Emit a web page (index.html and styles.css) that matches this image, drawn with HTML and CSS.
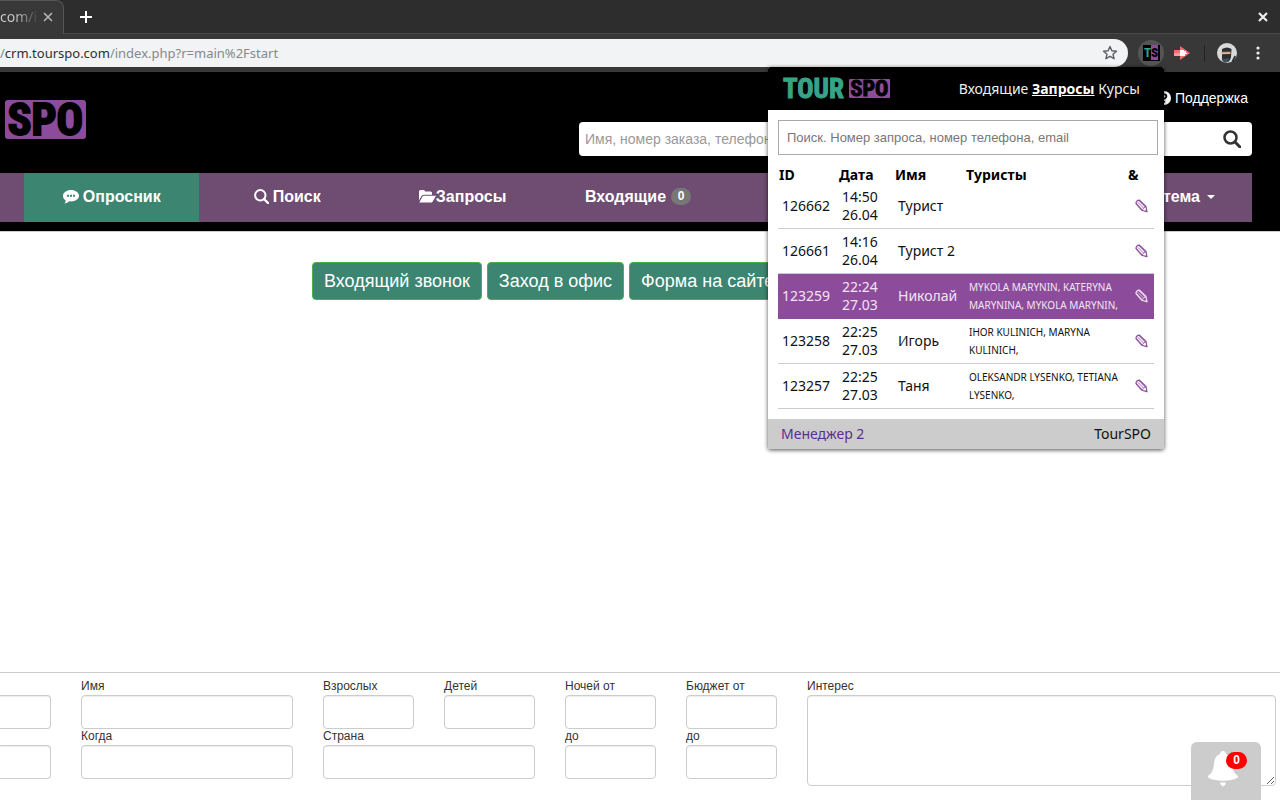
FILE: index.html
```html
<!DOCTYPE html>
<html lang="ru">
<head>
<meta charset="utf-8">
<title>TourSPO</title>
<meta name="viewport" content="width=device-width">
<link rel="stylesheet" href="styles.css">
</head>
<body>
<svg width="0" height="0" class="sprite"><symbol id="pencil" viewBox="0 0 13 14"><path d="M1 4.500Q1 1.500 4.500 1.200L11 7.500l1 5.300-5.300-1.600z" fill="none" stroke="currentColor" stroke-width="1.200" stroke-linejoin="round"/><path d="M2.700 3.200l6 6M4.300 2l6 6M1.500 5l5.700 5.700M11 7.800q-2.500.5-3.800 3.200" fill="none" stroke="currentColor" stroke-width=".8"/><path d="M10.800 11l1.400 2-2.300-.5z" fill="currentColor"/></symbol></svg>
<div class="tabstrip">
  <div class="tab"><span class="tab-title">com/i</span>
    <button class="bare tab-close" aria-label="Закрыть вкладку"><svg width="10" height="10" viewBox="0 0 10 10"><path d="M1 1l8 8M9 1l-8 8" stroke="#b8b8b8" stroke-width="1.500"/></svg></button>
  </div>
  <button class="bare new-tab" aria-label="Новая вкладка"><svg width="12" height="12" viewBox="0 0 12 12"><path d="M6 0v12M0 6h12" stroke="#fff" stroke-width="2"/></svg></button>
  <button class="bare window-close" aria-label="Закрыть окно"><svg width="10" height="10" viewBox="0 0 10 10"><path d="M1 1l8 8M9 1l-8 8" stroke="#eee" stroke-width="2.2"/></svg></button>
</div>
<div class="toolbar">
  <div class="address"><span class="url"><i>/</i>crm.tourspo.com<i>/index.php?r=main%2Fstart</i></span>
    <button class="bare" aria-label="В закладки"><svg width="16" height="16" viewBox="0 0 16 16"><path d="M8 1.600l1.900 4.200 4.600.4-3.500 3 1.100 4.500L8 11.300l-4.100 2.400L5 9.200l-3.500-3 4.600-.4z" fill="none" stroke="#5b5e62" stroke-width="1.400" stroke-linejoin="round"/></svg></button>
  </div>
  <button class="bare ext" aria-label="TourSPO"><span class="ts">T<b>S</b></span></button>
  <button class="bare arrow" aria-label="Расширение"><svg width="18" height="14" viewBox="0 0 18 14"><path d="M1 4h6V0l10 7-10 7v-4H1z" fill="#f26d6d"/><path d="M7 4h4v1h2v2h1v1h-2v2H7z" fill="#fff"/><path d="M1 7h6v3H1z" fill="#ff9b92"/></svg></button>
  <span class="divider"></span>
  <button class="bare avatar" aria-label="Профиль"><svg width="20" height="20" viewBox="0 0 20 20"><circle cx="10" cy="10" r="10" fill="#d9d9d9"/><path d="M5 6q5-3 9.500 0l-.5 8q-1 5-5 5.500-3 0-4-3z" fill="#292e34"/><path d="M4.500 9l9-.3v2.300l-8.500.3z" fill="#ddb38e"/><path d="M4.500 9l9-.3" stroke="#8a5a36" stroke-width=".6"/><path d="M14.500 18.500l3-6 1.500 1-2.500 5z" fill="#292e34"/><path d="M5 15l3 1 4-1-1 4-4-.3z" fill="#3f5260"/></svg></button>
  <button class="bare" aria-label="Меню"><svg width="4" height="14" viewBox="0 0 4 14" fill="#eee"><circle cx="2" cy="2" r="1.600"/><circle cx="2" cy="7" r="1.600"/><circle cx="2" cy="12" r="1.600"/></svg></button>
</div>

<header class="site-header">
  <div class="header-top">
    <a class="logo" href="#">SPO</a>
    <div class="header-tools">
      <a class="support" href="#"><svg width="14" height="14" viewBox="0 0 14 14"><circle cx="7" cy="7" r="7" fill="#fff"/><path d="M4.800 5.200c.3-2.700 4.600-2.400 4.600.1C9.400 7 7.200 7 7.200 8.600M7.200 10v1.600" fill="none" stroke="#000" stroke-width="1.800"/></svg> Поддержка</a>
      <form class="search">
        <input type="text" aria-label="Поиск" placeholder="Имя, номер заказа, телефон">
        <button class="bare" type="button" aria-label="Найти"><svg width="18" height="18" viewBox="0 0 18 18"><circle cx="7.500" cy="7.500" r="6" fill="none" stroke="#333" stroke-width="2.500"/><path d="M12 12l5 5" stroke="#333" stroke-width="3" stroke-linecap="round"/></svg></button>
      </form>
    </div>
  </div>
  <nav class="nav">
    <a class="active" href="#"><svg width="16" height="14" viewBox="0 0 16 14"><path d="M8 0c4.400 0 8 2.500 8 5.700s-3.600 5.700-8 5.700c-.6 0-1.200 0-1.800-.1C4.700 12.700 3 13.300 1.300 13.500c.8-.8 1.300-1.700 1.400-3C1 9.400 0 7.700 0 5.700 0 2.500 3.600 0 8 0z" fill="#fff"/><path d="M4 4.700h2v2H4zM7 4.700h2v2H7zM10 4.700h2v2h-2z" fill="#3c8570"/></svg> Опросник</a>
    <a href="#"><svg width="15" height="15" viewBox="0 0 15 15"><circle cx="6.300" cy="6.300" r="5.200" fill="none" stroke="#fff" stroke-width="2"/><path d="M10 10l4 4" stroke="#fff" stroke-width="2.400" stroke-linecap="round"/></svg> Поиск</a>
    <a href="#"><svg width="17" height="13" viewBox="0 0 17 13" fill="#fff"><path d="M0 10.500V1.500Q0 0 1.500 0h3Q6 0 6 1.500h5.500Q13 1.500 13 3v1.700H5q-1.500 0-2.500 1.300z"/><path d="M4.800 5.700H17L13.700 11.400Q13 12.600 11.500 12.600H.3l3.200-6q.5-.9 1.300-.9z"/></svg>Запросы</a>
    <a href="#">Входящие <span class="count">0</span></a>
    <span class="covered"></span>
    <a class="system" href="#">Система <span class="caret"></span></a>
  </nav>
</header>

<main class="actions">
  <button>Входящий звонок</button>
  <button>Заход в офис</button>
  <button>Форма на сайте</button>
</main>

<form class="survey">
  <div class="field bleed"><span class="label"></span><input type="text" aria-label="Поле 1"></div>
  <div class="field"><label for="name">Имя</label><input id="name" type="text"></div>
  <div class="field"><label for="adults">Взрослых</label><input id="adults" type="text"></div>
  <div class="field"><label for="kids">Детей</label><input id="kids" type="text"></div>
  <div class="field"><label for="nights">Ночей от</label><input id="nights" type="text"></div>
  <div class="field"><label for="budget">Бюджет от</label><input id="budget" type="text"></div>
  <div class="field interest"><label for="interest">Интерес</label><textarea id="interest"></textarea></div>
  <div class="field bleed"><span class="label"></span><input type="text" aria-label="Поле 2"></div>
  <div class="field"><label for="when">Когда</label><input id="when" type="text"></div>
  <div class="field wide"><label for="country">Страна</label><input id="country" type="text"></div>
  <div class="field"><label for="nights2">до</label><input id="nights2" type="text"></div>
  <div class="field"><label for="budget2">до</label><input id="budget2" type="text"></div>
</form>

<button class="bare bell" aria-label="Уведомления"><svg width="32" height="36" viewBox="0 0 32 36" fill="#fff"><path d="M13 3q0-3 3-3t3 3c4 1.500 5.500 5 6 10 .6 6 2 9 5.500 11.500.9.7.6 2-.3 2.600-7 3.600-21.400 3.600-28.400 0-.9-.6-1.200-1.900-.3-2.600C5 22 6.400 19 7 13c.5-5 2-8.500 6-10z"/><path d="M13 31.500h6q0 2-3 4-3-2-3-4z"/></svg><span class="bell-count">0</span></button>

<aside class="popup">
  <header class="popup-head">
    <div class="popup-logo"><span class="tour">TOUR</span><span class="spo">SPO</span></div>
    <nav><a href="#">Входящие</a> <a class="current" href="#">Запросы</a> <a href="#">Курсы</a></nav>
  </header>
  <div class="popup-body">
    <input type="text" aria-label="Поиск запроса" placeholder="Поиск. Номер запроса, номер телефона, email">
    <table>
      <colgroup><col class="c-id"><col class="c-date"><col class="c-name"><col><col class="c-edit"></colgroup>
      <thead><tr><th>ID</th><th>Дата</th><th>Имя</th><th>Туристы</th><th>&amp;</th></tr></thead>
      <tbody>
        <tr><td>126662</td><td>14:50<br>26.04</td><td>Турист</td><td></td><td><a href="#" aria-label="Изменить"><svg width="13" height="14"><use href="#pencil"/></svg></a></td></tr>
        <tr><td>126661</td><td>14:16<br>26.04</td><td>Турист 2</td><td></td><td><a href="#" aria-label="Изменить"><svg width="13" height="14"><use href="#pencil"/></svg></a></td></tr>
        <tr class="selected"><td>123259</td><td>22:24<br>27.03</td><td>Николай</td><td><small>MYKOLA MARYNIN, KATERYNA MARYNINA, MYKOLA MARYNIN,</small></td><td><a href="#" aria-label="Изменить"><svg width="13" height="14"><use href="#pencil"/></svg></a></td></tr>
        <tr><td>123258</td><td>22:25<br>27.03</td><td>Игорь</td><td><small>IHOR KULINICH, MARYNA KULINICH,</small></td><td><a href="#" aria-label="Изменить"><svg width="13" height="14"><use href="#pencil"/></svg></a></td></tr>
        <tr><td>123257</td><td>22:25<br>27.03</td><td>Таня</td><td><small>OLEKSANDR LYSENKO, TETIANA LYSENKO,</small></td><td><a href="#" aria-label="Изменить"><svg width="13" height="14"><use href="#pencil"/></svg></a></td></tr>
      </tbody>
    </table>
  </div>
  <footer class="popup-foot"><a href="#">Менеджер 2</a><span>TourSPO</span></footer>
</aside>
</body>
</html>
```
FILE: styles.css
```css
* { box-sizing: border-box; }
body {
  margin: 0;
  min-height: 100vh;
  display: flex;
  flex-direction: column;
  position: relative;
  overflow-x: hidden;
  background: #fff;
  color: #333;
  font: 14px/20px "Liberation Sans", Arial, sans-serif;
}
a { color: inherit; text-decoration: none; }
svg { display: block; }
.sprite { position: absolute; }
.bare { border: 0; padding: 0; background: none; color: inherit; font: inherit; display: flex; align-items: center; justify-content: center; }

.tabstrip { height: 34px; display: flex; align-items: center; gap: 16px; padding-right: 12px; background: #2d2d2d; border-bottom: 1px solid #484848; }
.tab { height: 34px; width: 64px; display: flex; align-items: center; justify-content: space-between; padding-right: 10px; background: #383838; border: 1px solid #555; border-width: 1px 1px 0 0; border-radius: 0 8px 0 0; }
.tab-title { font: 14px/20px "Noto Sans", sans-serif; background: linear-gradient(90deg, #ccc 40%, #444); -webkit-background-clip: text; background-clip: text; color: transparent; }
.window-close { margin-left: auto; }
.toolbar { height: 38px; display: flex; align-items: center; background: #383838; padding-right: 20px; }
.address { flex: 1; height: 28px; display: flex; align-items: center; justify-content: space-between; padding-right: 10px; background: #f1f3f4; border-radius: 0 14px 14px 0; }
.url { font: 13px/20px "Noto Sans", sans-serif; color: #2d2f31; }
.url i { font-style: normal; color: #85898d; }
.ext { width: 26px; height: 26px; margin-left: 10px; border-radius: 50%; background: #555; }
.ts { width: 17px; height: 16px; background: #000; color: #37a387; font: bold 13px/16px "Roboto Condensed", "Liberation Sans Narrow", Roboto, sans-serif; text-align: center; }
.ts b { color: #000; background: #8d4c9b; }
.arrow { margin-left: 9px; }
.divider { width: 1px; height: 16px; margin: 0 12px 0 13px; background: #222; }
.avatar { margin-right: 19px; }

.site-header { background: #000; color: #fff; padding: 16px 28px 9px 0; border-bottom: 1px solid #ccc; }
.header-top { display: flex; justify-content: space-between; align-items: flex-start; padding-bottom: 17px; }
.logo { width: 81px; height: 39px; margin: 12px 0 0 5px; border-radius: 3px; background: #8d4c9b; color: #000; text-align: center; font: bold 44px/40px "Roboto Condensed", "Liberation Sans Narrow", Roboto, sans-serif; -webkit-text-stroke: 2px #000; }
.header-tools { width: 54%; max-width: 673px; display: flex; flex-direction: column; gap: 14px; }
.support { align-self: flex-end; display: flex; align-items: center; gap: 4px; padding-right: 4px; }
.search { height: 34px; display: flex; background: #fff; border-radius: 4px; padding-right: 11px; }
.search input { flex: 1; border: 0; background: none; padding: 0 6px; font: inherit; }
.search input::placeholder { color: #999; }
.nav { height: 49px; display: grid; grid-template-columns: repeat(7, 1fr); background: #6f4c72; padding-left: 24px; font: bold 16px/20px "Liberation Sans", Arial, sans-serif; }
.nav a { display: flex; align-items: center; justify-content: center; gap: 4px; padding-bottom: 2px; }
.nav a:nth-child(3) { gap: 0; }
.nav .active { background: #3c8570; }
.covered { grid-column: span 2; }
.count { min-width: 20px; height: 17px; margin-left: 1px; border-radius: 9px; background: #777; font-size: 12px; line-height: 17px; text-align: center; }
.nav .system { justify-content: flex-end; padding-right: 37px; gap: 7px; }
.caret { border: 4px solid transparent; border-top-color: #fff; border-bottom: 0; }

.actions { flex: 1; display: flex; align-items: flex-start; gap: 5px; padding: 30px 0 0 312px; }
.actions button { height: 38px; padding: 0 11px; border: 1px solid #4cae4c; border-radius: 4px; background: #3c8570; color: #fff; font: 18px/24px "Liberation Sans", Arial, sans-serif; white-space: nowrap; }

.survey { display: grid; grid-template-columns: 51fr 212fr 91fr 91fr 91fr 91fr 469fr; grid-template-rows: 50px auto; column-gap: 30px; padding: 6px 4px 14px 0; border-top: 1px solid #ccc; font-size: 12px; line-height: 14px; }
.field { min-width: 0; display: flex; flex-direction: column; }
.label, .field label { height: 16px; }
.field input, .field textarea { width: 100%; height: 34px; margin: 0; border: 1px solid #ccc; border-radius: 4px; background: #fff; box-shadow: inset 0 1px 1px rgba(0, 0, 0, .07); }
.bleed input { border-left: 0; border-radius: 0 4px 4px 0; }
.wide { grid-column: span 2; }
.interest { grid-row: span 2; }
.field textarea { height: 91px; }

.bell { position: absolute; right: 19px; bottom: 0; width: 70px; height: 58px; padding: 0 6px 4px 0; background: #ccc; border-radius: 6px 6px 0 0; }
.bell-count { position: absolute; left: 35px; top: 10px; width: 21px; height: 17px; border-radius: 9px; background: red; color: #fff; font: bold 12px/16px "Liberation Sans", Arial, sans-serif; }

.popup { position: absolute; top: 67px; right: 116px; width: 396px; border-radius: 2px; background: #fff; box-shadow: 0 1px 4px rgba(0, 0, 0, .7); color: #111; font: 14px/18px "Noto Sans", sans-serif; }
.popup-head { height: 43px; display: flex; align-items: center; justify-content: space-between; padding: 0 24px 0 15px; background: #000; color: #eee; border-radius: 2px 2px 0 0; }
.popup-head .current { font-weight: bold; text-decoration: underline; color: #fff; }
.popup-logo { display: flex; align-items: center; gap: 5px; font: bold 24px/20px "Roboto Condensed", "Liberation Sans Narrow", Roboto, sans-serif; }
.tour { color: #37a387; font-size: 27px; -webkit-text-stroke: 1px #37a387; }
.spo { width: 41px; height: 19px; font-size: 22px; line-height: 19px; text-align: center; background: #8d4c9b; color: #000; border-radius: 1px; -webkit-text-stroke: 1px #000; }
.popup-body { padding: 10px 6px 10px 10px; }
.popup-body input { display: block; width: 100%; height: 35px; margin-bottom: 10px; padding: 0 8px; border: 1px solid #aaa; font: 13px/18px "Liberation Sans", Arial, sans-serif; }
.popup-body input::placeholder { color: #777; }
table { width: 376px; table-layout: fixed; border-collapse: separate; border-spacing: 0; }
.c-id { width: 60px; }
.c-date { width: 56px; }
.c-name { width: 71px; }
.c-edit { width: 27px; }
th { height: 19px; padding: 0 1px; text-align: left; color: #000; }
td { height: 45px; padding: 4px 0 4px 4px; border-bottom: 1px solid #ccc; white-space: nowrap; }
small { display: block; font-size: 10px; line-height: 18px; white-space: normal; }
td:last-child { padding-left: 8px; color: #8d4c9b; }
.selected, .selected td:last-child { background: #8d4c9b; color: #f1e4f3; }
.selected td { border-color: #8d4c9b; }
.popup-foot { height: 30px; display: flex; align-items: center; justify-content: space-between; padding: 0 13px; background: #ccc; }
.popup-foot a { color: #5c2d91; }
```
